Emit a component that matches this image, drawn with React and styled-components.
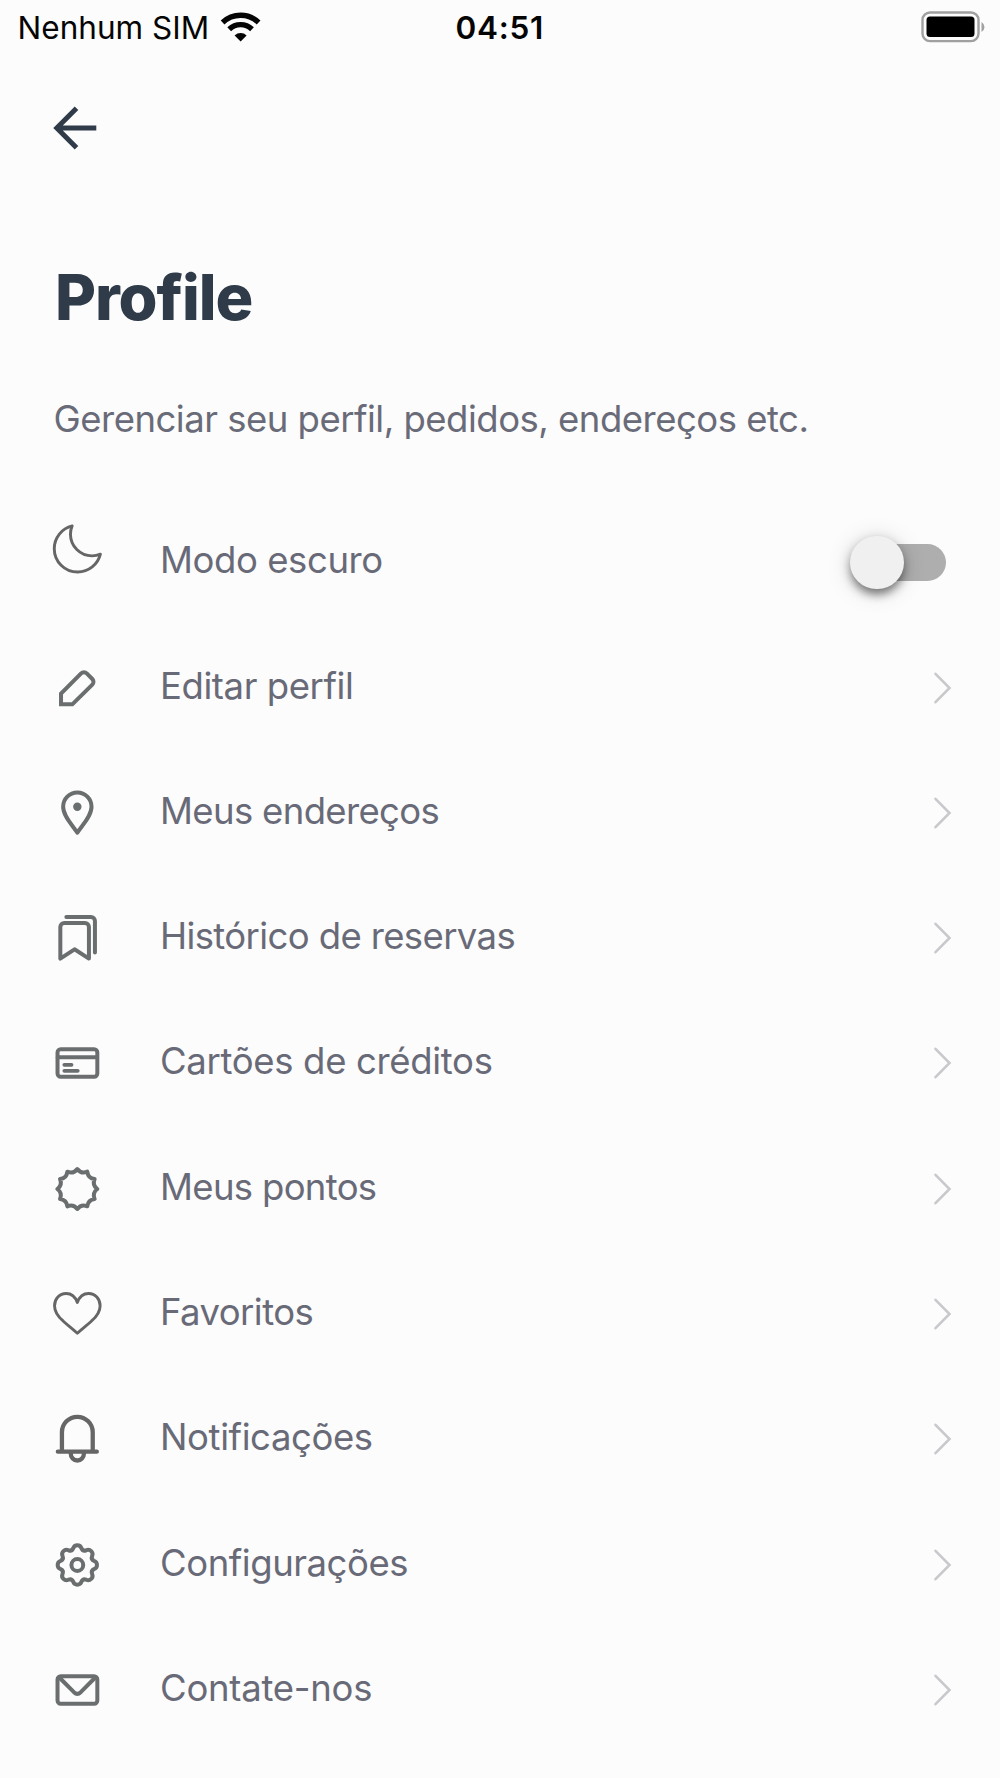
import React, { useState } from 'react'
import styled, { createGlobalStyle } from 'styled-components'

const GlobalStyle = createGlobalStyle`
  body {
    margin: 0;
    background: #fcfcfc;
  }
`

const Screen = styled.div`
  width: 1000px;
  height: 1778px;
  overflow: hidden;
  background: #fcfcfc;
  font-family: Inter, 'Liberation Sans', sans-serif;
  -webkit-font-smoothing: antialiased;
`

const StatusBar = styled.div`
  display: grid;
  grid-template-columns: 1fr auto 1fr;
  align-items: center;
  height: 54px;
  padding: 1px 15px 0 17.5px;
  box-sizing: border-box;
  font-size: 31.5px;
  line-height: 54px;
  color: #050505;
`

const Carrier = styled.div`
  display: flex;
  align-items: center;
  gap: 10.5px;
  letter-spacing: 0.02px;

  svg {
    margin-top: -2px;
  }
`

const Clock = styled.div`
  margin-right: 3px;
  font-weight: 600;
  letter-spacing: 0.7px;
`

const Battery = styled.svg`
  justify-self: end;
  width: 64px;
  height: 32px;
  margin-top: -2px;
`

const Header = styled.header`
  padding: 0 53px;
`

const BackButton = styled.button`
  display: block;
  width: 44px;
  height: 44px;
  margin-top: 52px;
  padding: 0;
  border: 0;
  background: none;

  svg {
    display: block;
  }
`

const Title = styled.h1`
  margin: 107px 0 0 2px;
  color: #2f3b48;
  font-size: 63px;
  font-weight: 800;
  line-height: 80px;
  letter-spacing: -1.1px;
`

const Subtitle = styled.p`
  margin: 58px 0 0;
  padding-left: 0.5px;
  color: #6a6b79;
  font-size: 36.5px;
  line-height: 48px;
  letter-spacing: -0.5px;
  white-space: nowrap;
`

const Menu = styled.ul`
  margin: 56.6px 0 0;
  padding: 0;
  list-style: none;
`

const Row = styled.li`
  display: flex;
  align-items: center;
  height: 125.3px;
  padding: 0 48px;
`

const RowIcon = styled.svg`
  flex: none;
  width: 60px;
  height: 60px;
  margin-top: ${props => props.$shift || 0}px;
  margin-right: 52px;
  overflow: visible;
  fill: none;
  stroke: #6b6e6f;
  stroke-width: 4;
  stroke-linecap: round;
  stroke-linejoin: round;
`

const Label = styled.span`
  flex: 1;
  padding-bottom: 4px;
  color: #696a78;
  font-size: 36.5px;
  line-height: 48px;
  letter-spacing: ${props => props.$track}px;
  white-space: nowrap;
`

const Chevron = styled.svg`
  width: 20px;
  height: 34px;
  fill: none;
  stroke: #c9c9cd;
  stroke-width: 2.6;
  stroke-linecap: round;
`

const Track = styled.button`
  display: flex;
  align-items: center;
  justify-content: ${props => (props.$on ? 'flex-end' : 'flex-start')};
  width: 88px;
  height: 37.4px;
  margin-right: 5.8px;
  padding: 0;
  border: 0;
  border-radius: 19px;
  background: #aeaeae;
`

const Thumb = styled.span`
  flex: none;
  width: 53.4px;
  height: 53.4px;
  margin: 0 -8px;
  border-radius: 50%;
  background: #f0f0f0;
  box-shadow: 0 7px 9px -2px rgba(0, 0, 0, 0.34),
    0 4px 12px rgba(0, 0, 0, 0.26), 0 3px 26px rgba(0, 0, 0, 0.14);
`

// degrees run clockwise from the top
const polar = (r, deg) => {
  const a = (deg * Math.PI) / 180
  return `${(r * Math.sin(a)).toFixed(2)} ${(-r * Math.cos(a)).toFixed(2)}`
}

const badgePath = () => {
  let d = `M${polar(20, 0)}`
  for (let i = 0; i < 12; i++) {
    d += `Q${polar(15.2, i * 30 + 15)} ${polar(20, (i + 1) * 30)}`
  }
  return d + 'Z'
}

const gearPath = () => {
  let d = `M${polar(17.2, -14)}`
  for (let i = 0; i < 8; i++) {
    const mid = i * 45
    d += `A4.4 4.4 0 0 1 ${polar(17.2, mid + 14)}`
    d += `Q${polar(14.6, mid + 22.5)} ${polar(17.2, mid + 31)}`
  }
  return d + 'Z'
}

// icon drawings, all centred on 0,0
const icons = {
  moon: (
    <path
      transform='scale(0.1125) translate(-256 -256)'
      strokeWidth='26'
      stroke='#666'
      d='M210 51C119 73 51 155 51 253c0 115 93 208 208 208 98 0 180-68 202-159-23 10-48 15-74 15-106 0-192-86-192-192 0-26 5-51 15-74z'
    />
  ),
  pencil: (
    <path
      strokeLinejoin='miter'
      d='M-16.3 16.3V5.6L3.8-14.6a4 4 0 0 1 5.6 0L15-9a4 4 0 0 1 0 5.6L-5 16.3Z'
    />
  ),
  pin: (
    <>
      <path d='M0 19.7C-4.5 12.6-14.2 3.2-14.2-6.3a14.2 14.2 0 0 1 28.4 0C14.2 3.2 4.5 12.6 0 19.7Z' />
      <circle cy='-6.2' r='4.2' fill='#6b6e6f' stroke='none' />
    </>
  ),
  bookmark: (
    <>
      <path d='M-17 20.6V-11a4 4 0 0 1 4-4H7.6a4 4 0 0 1 4 4V20.6L-2.8 11.3Z' />
      <path d='M-11-21H13.6a4 4 0 0 1 4 4V14.5' />
    </>
  ),
  card: (
    <>
      <rect x='-19.8' y='-13.8' width='39.8' height='27.6' rx='3.2' />
      <path d='M-19.5-5.8H19.5' />
      <path strokeWidth='3.8' d='M-13 1.8h7.2M-13 7.8H0.4' />
    </>
  ),
  badge: <path d={badgePath()} />,
  heart: (
    <path
      strokeWidth='2.9'
      stroke='#666'
      d='M0 19.3C-5.5 14-8.5 12.2-14 7.2C-20 2-22.8-2.6-22.8-8.3C-22.8-15.3-17.8-20.5-11.2-20.5C-6-20.5-2-17 0-11.5C2-17 6-20.5 11.2-20.5C17.8-20.5 22.8-15.3 22.8-8.3C22.8-2.6 20 2 14 7.2C8.5 12.2 5.5 14 0 19.3Z'
    />
  ),
  bell: (
    <path
      stroke='#666'
      strokeWidth='4.3'
      d='M-15.4 12.5V-6.8a15.4 15.4 0 0 1 30.8 0V12.5M-19.5 12.7H19.5M-6.6 14.5a6.6 7 0 0 0 13.2 0'
    />
  ),
  gear: (
    <>
      <path d={gearPath()} />
      <circle r='5.9' />
    </>
  ),
  mail: (
    <>
      <rect x='-19.8' y='-13.8' width='39.8' height='27.6' rx='3.2' />
      <path d='M-18-12.5L-3.4 2.2Q0 5.4 3.4 2.2L18-12.5' />
    </>
  )
}

const items = [
  { icon: 'moon', text: 'Modo escuro', track: -0.42, toggle: true },
  { icon: 'pencil', text: 'Editar perfil', track: -0.42 },
  { icon: 'pin', text: 'Meus endereços', track: -0.65 },
  { icon: 'bookmark', text: 'Histórico de reservas', track: -0.62 },
  { icon: 'card', text: 'Cartões de créditos', track: -0.33 },
  { icon: 'badge', text: 'Meus pontos', track: -0.68 },
  { icon: 'heart', text: 'Favoritos', track: -0.55 },
  { icon: 'bell', text: 'Notificações', track: -0.4 },
  { icon: 'gear', text: 'Configurações', track: -0.45 },
  { icon: 'mail', text: 'Contate-nos', track: -0.26 }
]

const App = () => {
  const [dark, setDark] = useState(false)

  return (
    <Screen>
      <GlobalStyle />
      <StatusBar>
        <Carrier>
          Nenhum SIM
          <svg width='42' height='32' viewBox='0 0 42 32'>
            <g fill='none' stroke='#050505' strokeWidth='5.4'>
              <path d='M2.6 11.5a26 26 0 0 1 36 0' />
              <path d='M9.2 18.2a16.5 16.5 0 0 1 22.8 0' />
            </g>
            <path d='M20.6 30.5L14.6 24.4a8.6 8.6 0 0 1 12 0Z' fill='#050505' />
          </svg>
        </Carrier>
        <Clock>04:51</Clock>
        <Battery viewBox='0 0 64 32'>
          <rect
            x='1.5'
            y='1.5'
            width='56'
            height='28.6'
            rx='7.5'
            fill='none'
            stroke='#a0a0a0'
            strokeWidth='2.4'
          />
          <rect x='5.5' y='5.5' width='48' height='20.6' rx='3.5' fill='#000' />
          <path d='M60.5 11q3 2 3 5t-3 5Z' fill='#a0a0a0' />
        </Battery>
      </StatusBar>

      <Header>
        <BackButton aria-label='Voltar'>
          <svg width='44' height='44' viewBox='0 0 44 44'>
            <path
              d='M23.5 2.3L3.8 22L23.5 41.7M3.8 22H43.3'
              fill='none'
              stroke='#2f3b48'
              strokeWidth='5'
            />
          </svg>
        </BackButton>
        <Title>Profile</Title>
        <Subtitle>Gerenciar seu perfil, pedidos, endereços etc.</Subtitle>
      </Header>

      <Menu>
        {items.map(({ icon, text, track, toggle }) =>
          <Row key={text}>
            <RowIcon viewBox='-29.33 -30 60 60' $shift={toggle ? -26 : 0}>
              {icons[icon]}
            </RowIcon>
            <Label $track={track}>{text}</Label>
            {toggle
              ? <Track $on={dark} onClick={() => setDark(!dark)}>
                  <Thumb />
                </Track>
              : <Chevron viewBox='0 0 20 34'>
                  <path d='M3.5 2.8L17.5 17L3.5 31.2' />
                </Chevron>}
          </Row>
        )}
      </Menu>
    </Screen>
  )
}

export default App
